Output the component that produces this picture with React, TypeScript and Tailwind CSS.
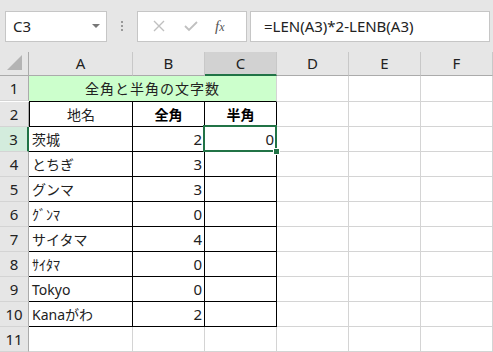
import React from "react";

const COLS = ["A", "B", "C", "D", "E", "F"];
const WIDTHS = ["w-[104px]", "w-[72px]", "w-[72px]", "w-[72px]", "w-[72px]", "w-[72px]"];

const ROWS: { name: string; zen: string; han: string }[] = [
  { name: "茨城", zen: "2", han: "0" },
  { name: "とちぎ", zen: "3", han: "" },
  { name: "グンマ", zen: "3", han: "" },
  { name: "ｸﾞﾝﾏ", zen: "0", han: "" },
  { name: "サイタマ", zen: "4", han: "" },
  { name: "ｻｲﾀﾏ", zen: "0", han: "" },
  { name: "Tokyo", zen: "0", han: "" },
  { name: "Kanaがわ", zen: "2", han: "" },
];

const font = "font-['Noto_Sans','Noto_Sans_CJK_JP',sans-serif]";

function RowHead({ n, active }: { n: number; active?: boolean }) {
  return (
    <div
      className={
        "flex h-[25px] w-[29px] shrink-0 items-center justify-center border-b border-[#d4d4d4] text-[15px] text-[#222] " +
        (active ? "border-r-2 border-r-[#217346] bg-[#d3ecdd]" : "border-r border-r-[#ababab] bg-[#e6e6e6]")
      }
    >
      {n}
    </div>
  );
}

function Empty({ w }: { w: string }) {
  return <div className={w + " h-[25px] shrink-0 border-b border-r border-[#d4d4d4] bg-white"} />;
}

export default function App() {
  return (
    <div className={"h-[352px] w-[493px] overflow-hidden bg-white " + font}>
      {/* formula bar */}
      <div className="flex h-[52px] items-center bg-[#e6e6e6] pl-[5px]">
        <div className="flex h-[31px] w-[102px] items-center justify-between border border-[#c6c6c6] bg-white pl-[7px] pr-[6px] text-[15px] text-[#222]">
          <span>C3</span>
          <span className="h-0 w-0 border-x-[4px] border-t-[4px] border-x-transparent border-t-[#777]" />
        </div>
        <div className="mx-[14px] flex flex-col gap-[2px]">
          <span className="h-[2px] w-[2px] bg-[#999]" />
          <span className="h-[2px] w-[2px] bg-[#999]" />
          <span className="h-[2px] w-[2px] bg-[#999]" />
        </div>
        <div className="flex h-[31px] w-[110px] items-center border border-[#c6c6c6] bg-white">
          <svg width="12" height="12" viewBox="0 0 12 12" className="ml-[15px]">
            <path d="M1 1L11 11M11 1L1 11" stroke="#c0c0c0" strokeWidth="1.4" fill="none" />
          </svg>
          <svg width="14" height="12" viewBox="0 0 14 12" className="ml-[19px]">
            <path d="M1 6L5 10L13 2" stroke="#c0c0c0" strokeWidth="1.8" fill="none" />
          </svg>
          <span className="ml-[17px] font-['Liberation_Serif',serif] text-[15px] italic text-[#555]">
            f<span className="text-[12px]">x</span>
          </span>
        </div>
        <div className="ml-[3px] flex h-[31px] w-[240px] items-center border border-[#c6c6c6] bg-white pl-[13px] text-[15px] text-[#222]">
          =LEN(A3)*2-LENB(A3)
        </div>
      </div>

      {/* column header */}
      <div className="flex h-[24px]">
        <div className="relative h-[24px] w-[29px] shrink-0 border-b border-r border-[#ababab] bg-[#e6e6e6]">
          <span className="absolute bottom-[5px] right-[6px] h-0 w-0 border-b-[15px] border-l-[15px] border-b-[#b4b4b4] border-l-transparent" />
        </div>
        {COLS.map((c, i) => (
          <div
            key={c}
            className={
              WIDTHS[i] +
              " flex shrink-0 items-center justify-center border-r border-r-[#c8c8c8] text-[15px] text-[#222] " +
              (c === "C" ? "border-b-[2px] border-b-[#217346] bg-[#d2d2d2]" : "border-b border-b-[#ababab] bg-[#e6e6e6]")
            }
          >
            {c}
          </div>
        ))}
      </div>

      {/* row 1 */}
      <div className="flex">
        <RowHead n={1} />
        <div className="flex h-[26px] w-[248px] shrink-0 items-center justify-center border-b border-r border-b-black border-r-[#d4d4d4] bg-[#ccffcc] text-[14px] tracking-[1px] text-[#222]">
          全角と半角の文字数
        </div>
        <Empty w="w-[72px] h-[26px]" />
        <Empty w="w-[72px] h-[26px]" />
        <Empty w="w-[72px] h-[26px]" />
      </div>

      {/* row 2 */}
      <div className="flex">
        <RowHead n={2} />
        <div className="flex h-[25px] w-[104px] shrink-0 items-center justify-center border-b border-l border-r border-black text-[14px] text-[#222]">
          地名
        </div>
        <div className="flex h-[25px] w-[72px] shrink-0 items-center justify-center border-b border-r border-black text-[14px] font-bold text-black">
          全角
        </div>
        <div className="flex h-[25px] w-[72px] shrink-0 items-center justify-center border-b border-r border-black text-[14px] font-bold text-black">
          半角
        </div>
        <Empty w="w-[72px]" />
        <Empty w="w-[72px]" />
        <Empty w="w-[72px]" />
      </div>

      {ROWS.map((r, i) => {
        const active = i === 0;
        return (
          <div key={i} className="flex">
            <RowHead n={i + 3} active={active} />
            <div className="flex h-[25px] w-[104px] shrink-0 items-center border-b border-r border-black pl-[3px] text-[14px] text-[#222]">
              {r.name}
            </div>
            <div className="flex h-[25px] w-[72px] shrink-0 items-center justify-end border-b border-r border-black pr-[2px] text-[15px] text-[#222]">
              {r.zen}
            </div>
            <div className="relative flex h-[25px] w-[72px] shrink-0 items-center justify-end border-b border-r border-black pr-[2px] text-[15px] text-[#222]">
              {r.han}
              {active && (
                <span className="absolute -left-[2px] -top-[2px] z-10 h-[27px] w-[74px] border-2 border-[#217346]">
                  <span className="absolute -bottom-[5px] -right-[5px] h-[7px] w-[7px] border border-white bg-[#217346]" />
                </span>
              )}
            </div>
            <Empty w="w-[72px]" />
            <Empty w="w-[72px]" />
            <Empty w="w-[72px]" />
          </div>
        );
      })}

      {/* row 11 */}
      <div className="flex">
        <RowHead n={11} />
        {WIDTHS.map((w, i) => (
          <Empty key={i} w={w} />
        ))}
      </div>
    </div>
  );
}
